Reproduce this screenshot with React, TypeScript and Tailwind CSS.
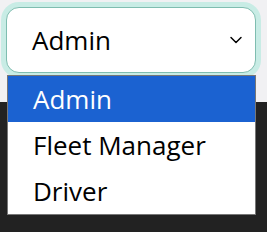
import { ChevronDown } from 'lucide-react';

const options = ['Admin', 'Fleet Manager', 'Driver'];

export default function App() {
    return (
        <div className="relative w-[267px] h-[232px] overflow-hidden bg-[#222222] font-['Open_Sans',sans-serif]">
            <div className="h-[102px] bg-[#f1f1f3] pt-[7px] pl-[6px] pr-[11px]">
                <div className="flex items-center justify-between h-[66px] rounded-[13px] border border-[#7fbdb0] bg-white ring-[5px] ring-[#c8ece5] pl-[25px] pr-[9px]">
                    <span className="text-[26px] text-black leading-none">Admin</span>
                    <ChevronDown className="w-5 h-5 text-black" strokeWidth={1.75} />
                </div>
            </div>
            <div className="absolute left-[7px] top-[75px] w-[249px] border border-[#777777] bg-white">
                {options.map((o, i) => (
                    <div
                        key={o}
                        className={
                            i === 0
                                ? 'h-[46px] flex items-center pl-[25px] text-[26px] bg-[#1b62d1] text-white'
                                : 'h-[46px] flex items-center pl-[25px] text-[26px] text-black'
                        }
                    >
                        {o}
                    </div>
                ))}
            </div>
        </div>
    );
}
